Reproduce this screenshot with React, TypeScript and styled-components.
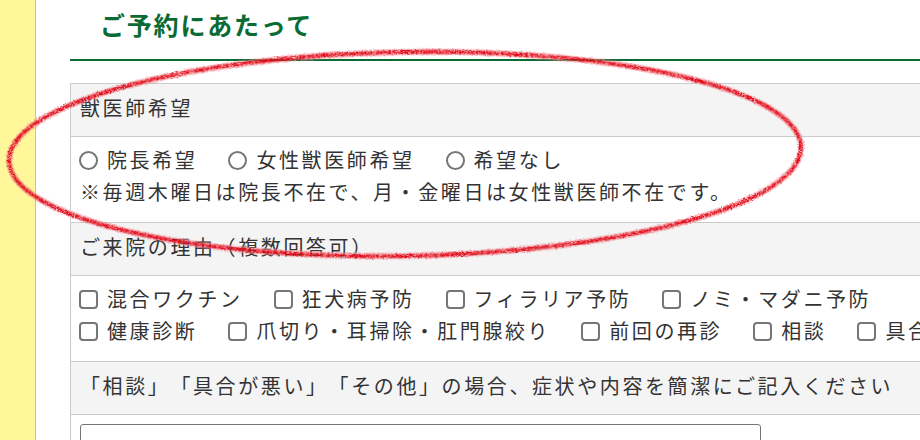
import React from 'react';
import styled, {createGlobalStyle} from "styled-components";

const GlobalStyle = createGlobalStyle`
  html, body {
    margin: 0;
    padding: 0;
    overflow: hidden;
    background: #fff;
  }
  body {
    font-family: "Noto Sans CJK JP", "Noto Sans", sans-serif;
    color: #333;
    text-spacing-trim: space-all;
  }
`

type ChoiceType = {
    label: string
}

const doctorChoices: ChoiceType[] = [
    {label: "院長希望"},
    {label: "女性獣医師希望"},
    {label: "希望なし"},
]

const reasonLines: string[][] = [
    ["混合ワクチン", "狂犬病予防", "フィラリア予防", "ノミ・マダニ予防"],
    ["健康診断", "爪切り・耳掃除・肛門腺絞り", "前回の再診", "相談", "具合が悪い", "その他"],
]

const Choice = (props: { type: "radio" | "checkbox", name: string, label: string }) => {
    return (
        <ChoiceLabel>
            <HiddenInput type={props.type} name={props.name}/>
            <Mark $round={props.type === "radio"}/>
            <span>{props.label}</span>
        </ChoiceLabel>
    )
}

// hand drawn red circle over the first block
const Scribble = () => {
    return (
        <ScribbleSvg width="920" height="440" viewBox="0 0 920 440">
            <defs>
                <filter id="crayon" x="-5%" y="-10%" width="110%" height="120%">
                    <feTurbulence type="fractalNoise" baseFrequency="0.7" numOctaves="2" seed="3" result="noise"/>
                    <feDisplacementMap in="SourceGraphic" in2="noise" scale="3" result="moved"/>
                    <feTurbulence type="fractalNoise" baseFrequency="1.6" numOctaves="1" seed="8" result="grain"/>
                    <feColorMatrix in="grain" type="matrix"
                                   values="0 0 0 0 0  0 0 0 0 0  0 0 0 0 0  0 0 0 3 -0.6" result="grainAlpha"/>
                    <feComposite in="moved" in2="grainAlpha" operator="in"/>
                </filter>
            </defs>
            <g filter="url(#crayon)" transform="rotate(-1 405 153)" fill="none">
                <ellipse cx="405" cy="154" rx="396" ry="102" stroke="#f48f97" strokeWidth="6.5" opacity="0.8"/>
                <ellipse cx="405" cy="154" rx="396" ry="102" stroke="#e30d1b" strokeWidth="3.8"/>
            </g>
        </ScribbleSvg>
    )
}

export default function App() {
    return (
        <>
            <GlobalStyle/>
            <Page>
                <Sidebar/>
                <Main>
                    <Heading>ご予約にあたって</Heading>

                    <FormTable>
                        <tbody>
                        <tr>
                            <HeadCell>獣医師希望</HeadCell>
                        </tr>
                        <tr>
                            <BodyCell>
                                <ChoiceLine>
                                    {doctorChoices.map(c =>
                                        <Choice key={c.label} type="radio" name="doctor" label={c.label}/>
                                    )}
                                </ChoiceLine>
                                <Note>※毎週木曜日は院長不在で、月・金曜日は女性獣医師不在です。</Note>
                            </BodyCell>
                        </tr>
                        <tr>
                            <HeadCell>ご来院の理由（複数回答可）</HeadCell>
                        </tr>
                        <tr>
                            <BodyCell>
                                {reasonLines.map((line, i) =>
                                    <ChoiceLine key={i}>
                                        {line.map(label =>
                                            <Choice key={label} type="checkbox" name="reason" label={label}/>
                                        )}
                                    </ChoiceLine>
                                )}
                            </BodyCell>
                        </tr>
                        <tr>
                            <HeadCell>「相談」「具合が悪い」「その他」の場合、症状や内容を簡潔にご記入ください</HeadCell>
                        </tr>
                        <tr>
                            <AreaCell>
                                <TextArea/>
                            </AreaCell>
                        </tr>
                        </tbody>
                    </FormTable>
                </Main>
                <Scribble/>
            </Page>
        </>
    );
};

const Page = styled.div`
  position: relative;
  display: flex;
  width: 920px;
  height: 440px;
  overflow: hidden;
`

const Sidebar = styled.div`
  flex: 0 0 35px;
  background-color: #fff799;
  border-right: 1px solid #9ccbe3;
`

const Main = styled.div`
  flex: 0 0 auto;
  width: 990px;
  padding-left: 34px;
`

const Heading = styled.h2`
  margin: 0 0 22px;
  padding: 6px 0 17px 30px;
  font-size: 25px;
  line-height: 36px;
  letter-spacing: 1.8px;
  font-weight: 700;
  color: #0a6b35;
  border-bottom: 2px solid #0a6b35;
`

const FormTable = styled.table`
  width: 960px;
  border-collapse: collapse;
  font-size: 20px;
  letter-spacing: 2.6px;
  color: #333;
`

const HeadCell = styled.th`
  padding: 8px 9px 12px;
  line-height: 32px;
  text-align: left;
  font-weight: 400;
  background-color: #f4f4f4;
  border: 1px solid #cccccc;
`

const BodyCell = styled.td`
  padding: 7px 9px 14px;
  line-height: 32px;
  background-color: #fff;
  border: 1px solid #cccccc;
`

const AreaCell = styled(BodyCell)`
  padding: 9px 9px 0;
`

const ChoiceLine = styled.div`
  display: flex;
  gap: 32px;
  white-space: nowrap;
`

const ChoiceLabel = styled.label`
  display: inline-flex;
  align-items: center;
`

const HiddenInput = styled.input`
  position: absolute;
  opacity: 0;
  width: 0;
  height: 0;
  margin: 0;
`

const Mark = styled.span<{ $round: boolean }>`
  display: block;
  box-sizing: border-box;
  flex: 0 0 19px;
  width: 19px;
  height: 19px;
  margin: 0 9px 0 -1px;
  border: 2px solid #767676;
  border-radius: ${props => props.$round ? "50%" : "4px"};
  background: #fff;
`

const Note = styled.div`
  white-space: nowrap;
`

const TextArea = styled.textarea`
  display: block;
  width: 681px;
  height: 80px;
  box-sizing: border-box;
  border: 1px solid #767676;
  border-radius: 3px;
  resize: none;
`

const ScribbleSvg = styled.svg`
  position: absolute;
  left: 0;
  top: 0;
  pointer-events: none;
`
